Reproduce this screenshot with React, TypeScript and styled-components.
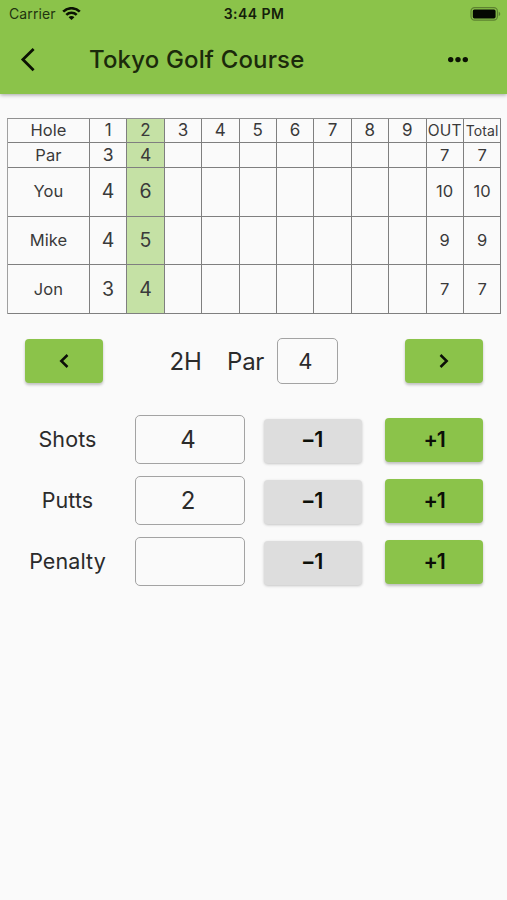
import React from "react";
import styled, { createGlobalStyle } from "styled-components";

const GlobalStyle = createGlobalStyle`
  * { box-sizing: border-box; }
  body {
    margin: 0;
    background: #fafafa;
    font-family: Inter, "Liberation Sans", sans-serif;
    color: #2b2b2b;
  }
  button { font: inherit; color: inherit; border: 0; padding: 0; background: none; }
`;

const Screen = styled.main`
  width: 507px;
  height: 900px;
  overflow: hidden;
  background: #fafafa;
`;

const Header = styled.header`
  height: 94px;
  background: #8bc34a;
  box-shadow: 0 1px 4px rgba(0, 0, 0, 0.35);
`;

const StatusBar = styled.div`
  display: grid;
  grid-template-columns: 1fr auto 1fr;
  align-items: center;
  height: 27px;
  padding: 0 6px 0 9px;
  color: #14200a;
  font-size: 14px;
  line-height: 27px;
`;

const Carrier = styled.div`
  display: flex;
  align-items: center;
  gap: 6px;
  color: #22340f;
  letter-spacing: 0.1px;
`;

const Clock = styled.div`
  margin-right: 2px;
  font-weight: 600;
  font-size: 14px;
  letter-spacing: 0.45px;
`;

const Battery = styled.svg`
  justify-self: end;
`;

const AppBar = styled.div`
  display: flex;
  align-items: center;
  height: 66px;
  padding: 0 37px 0 20px;
`;

const IconButton = styled.button`
  display: flex;
  width: 24px;
`;

const Title = styled.h1`
  flex: 1;
  margin: 0 0 0 45px;
  font-size: 24px;
  font-weight: 500;
  line-height: 32px;
  letter-spacing: 0.15px;
  color: #1b2a0b;
`;

const ScoreCard = styled.div`
  display: grid;
  grid-template-columns: 82px repeat(11, 37.4px);
  grid-template-rows: 24px 25px 48.6px 48.8px 48.6px;
  width: 494.4px;
  margin: 24px 0 0 7px;
  border-top: 1px solid #909090;
  border-left: 1px solid #a0a0a0;
`;

const Cell = styled.div<{ $active?: boolean; $size?: number }>`
  display: flex;
  align-items: center;
  justify-content: center;
  overflow: hidden;
  padding-bottom: 1px;
  border-right: 1px solid #7f7f7f;
  border-bottom: 1px solid #7f7f7f;
  background: ${(p) => (p.$active ? "#c5e1a5" : "transparent")};
  font-size: ${(p) => p.$size ?? 16.5}px;
  letter-spacing: 0.1px;
  color: #3a3a3a;
`;

const HoleNav = styled.section`
  display: flex;
  align-items: center;
  height: 46px;
  margin-top: 24px;
  padding: 0 24px 0 25px;
  font-size: 24px;
`;

const HoleLabel = styled.span`
  width: 33px;
  margin-left: 66px;
  padding-top: 2px;
  white-space: nowrap;
`;

const ParLabel = styled.span`
  width: 37px;
  margin-left: 25px;
  padding-top: 2px;
  letter-spacing: -0.3px;
`;

const ValueBox = styled.div<{ $width: number; $height: number; $size: number }>`
  display: flex;
  align-items: center;
  justify-content: center;
  width: ${(p) => p.$width}px;
  height: ${(p) => p.$height}px;
  padding-right: 4px;
  border: 1px solid #a3a3a3;
  border-radius: 5px;
  font-size: ${(p) => p.$size}px;
`;

const ParBox = styled(ValueBox)`
  margin: 0 67px 0 13px;
`;

const Button = styled.button<{ $tone?: "green" | "grey"; $width: number }>`
  display: flex;
  align-items: center;
  justify-content: center;
  width: ${(p) => p.$width}px;
  height: 44px;
  border-radius: 4px;
  background: ${(p) => (p.$tone === "grey" ? "#dddddd" : "#8bc34a")};
  box-shadow: ${(p) =>
    p.$tone === "grey"
      ? "0 1px 3px rgba(0, 0, 0, 0.22)"
      : "0 2px 3px rgba(0, 0, 0, 0.24)"};
  color: #0c0f08;
  font-size: 21.5px;
  font-weight: 600;
  letter-spacing: -1.2px;
`;

const Counters = styled.section`
  display: grid;
  grid-template-columns: 135px 110px 98px 98px;
  grid-auto-rows: 49px;
  row-gap: 12px;
  align-items: center;
  margin-top: 31px;
`;

const CounterLabel = styled.span`
  text-align: center;
  font-size: 21.5px;
  letter-spacing: 0.1px;
`;

const MinusButton = styled(Button)`
  margin: 4px 0 0 19px;
  padding: 0 3px 4px 0;
`;

const PlusButton = styled(Button)`
  margin: 1px 0 0 42px;
  padding-bottom: 1px;
`;

const rows: { name: string; scores: string[]; total: string; size: number }[] = [
  { name: "Par", scores: ["3", "4"], total: "7", size: 17.5 },
  { name: "You", scores: ["4", "6"], total: "10", size: 19.5 },
  { name: "Mike", scores: ["4", "5"], total: "9", size: 19.5 },
  { name: "Jon", scores: ["3", "4"], total: "7", size: 19.5 },
];

const counters = [
  { label: "Shots", value: "4" },
  { label: "Putts", value: "2" },
  { label: "Penalty", value: "" },
];

const holes = [1, 2, 3, 4, 5, 6, 7, 8, 9];
const currentHole = 2;

function Chevron({ right = false }: { right?: boolean }) {
  return (
    <svg width="12" height="16" viewBox="0 0 12 16" fill="none" stroke="#0c0f08" strokeWidth="2.5">
      <path d={right ? "M2.5 2 8.7 8 2.5 14" : "M9.5 2 3.3 8 9.5 14"} />
    </svg>
  );
}

export default function App() {
  return (
    <Screen>
      <GlobalStyle />
      <Header>
        <StatusBar>
          <Carrier>
            Carrier
            <svg width="19" height="14" viewBox="0 0 19 14" fill="none" stroke="#0b1203" strokeWidth="2.6">
              <path d="M1.2 4.6C5.8.1 13.2.1 17.8 4.6" />
              <path d="M4.3 7.9c2.9-2.8 7.5-2.8 10.4 0" />
              <path d="M9.5 13.1 6.6 10.2c1.6-1.6 4.2-1.6 5.8 0z" fill="#0b1203" stroke="none" />
            </svg>
          </Carrier>
          <Clock>3:44 PM</Clock>
          <Battery width="31" height="14" viewBox="0 0 31 14">
            <rect x="1" y="0.6" width="26.4" height="12.6" rx="3.6" fill="none" stroke="#5d8231" strokeWidth="1.2" />
            <rect x="2.8" y="2.4" width="22.8" height="9" rx="1.6" fill="#050802" />
            <path d="M28.7 4.7c2 .7 2 3.7 0 4.4z" fill="#5d8231" />
          </Battery>
        </StatusBar>
        <AppBar>
          <IconButton aria-label="Back">
            <svg width="16" height="26" viewBox="0 0 16 26" fill="none" stroke="#0b1203" strokeWidth="2.8">
              <path d="M13.6 2 2.9 12.6l10.7 10.6" />
            </svg>
          </IconButton>
          <Title>Tokyo Golf Course</Title>
          <IconButton aria-label="More">
            <svg width="24" height="8" viewBox="0 0 24 8" fill="#0b1203">
              <circle cx="4.7" cy="3.6" r="2.7" />
              <circle cx="12" cy="3.6" r="2.7" />
              <circle cx="19.3" cy="3.6" r="2.7" />
            </svg>
          </IconButton>
        </AppBar>
      </Header>

      <ScoreCard>
        <Cell>Hole</Cell>
        {holes.map((h) => (
          <Cell key={h} $active={h === currentHole} $size={17}>{h}</Cell>
        ))}
        <Cell $size={15.5}>OUT</Cell>
        <Cell $size={14}>Total</Cell>
        {rows.map((r) => (
          <React.Fragment key={r.name}>
            <Cell>{r.name}</Cell>
            {holes.map((h) => (
              <Cell key={h} $active={h === currentHole} $size={r.size}>{r.scores[h - 1]}</Cell>
            ))}
            <Cell>{r.total}</Cell>
            <Cell>{r.total}</Cell>
          </React.Fragment>
        ))}
      </ScoreCard>

      <HoleNav>
        <Button $width={79} aria-label="Previous hole"><Chevron /></Button>
        <HoleLabel>2H</HoleLabel>
        <ParLabel>Par</ParLabel>
        <ParBox $width={61} $height={46} $size={22}>4</ParBox>
        <Button $width={79} aria-label="Next hole"><Chevron right /></Button>
      </HoleNav>

      <Counters>
        {counters.map((c) => (
          <React.Fragment key={c.label}>
            <CounterLabel>{c.label}</CounterLabel>
            <ValueBox $width={110} $height={49} $size={24}>{c.value}</ValueBox>
            <MinusButton $tone="grey" $width={98}>−1</MinusButton>
            <PlusButton $width={98}>+1</PlusButton>
          </React.Fragment>
        ))}
      </Counters>
    </Screen>
  );
}
